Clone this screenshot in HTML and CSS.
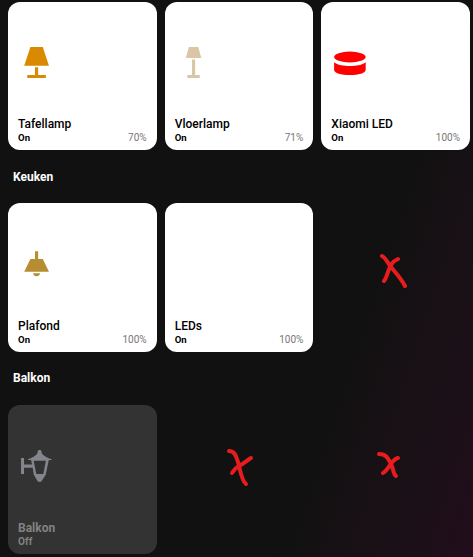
FILE: index.html
```html
<!DOCTYPE html>
<html lang="nl">
<head>
<meta charset="utf-8">
<title>Lampen</title>
<link rel="stylesheet" href="styles.css">
</head>
<body>
<main class="dashboard">
  <section class="grid">
    <article class="card">
      <svg class="icon amber" viewBox="0 0 24 24"><path d="M8,2H16L20,14H4L8,2M11,15H13V20H18V22H6V20H11V15Z"/></svg>
      <div class="info"><div class="name">Tafellamp</div><div class="status"><span class="state">On</span><span class="level">70%</span></div></div>
    </article>
    <article class="card">
      <svg class="icon beige" viewBox="0 0 24 24"><path d="M9,2H15L17,9H7L9,2M11,10H13V20H16V22H8V20H11V10Z"/></svg>
      <div class="info"><div class="name">Vloerlamp</div><div class="status"><span class="state">On</span><span class="level">71%</span></div></div>
    </article>
    <article class="card">
      <svg class="icon red" viewBox="0 0 24 24"><ellipse cx="12.2" cy="8.4" rx="10.2" ry="3.5"/><path d="M2,11.8C4.2,13.7 8.2,14.2 12.2,14.2S20.2,13.7 22.4,11.8V16.6C22.4,18.7 17.8,20.1 12.2,20.1S2,18.7 2,16.6Z"/></svg>
      <div class="info"><div class="name">Xiaomi LED</div><div class="status"><span class="state">On</span><span class="level">100%</span></div></div>
    </article>
  </section>
  <h2 class="room">Keuken</h2>
  <section class="grid">
    <article class="card">
      <svg class="icon brass" viewBox="0 0 24 24"><path d="M8,9H11V4H13V9H16L20,17.2H4L8,9M14.2,18.2C14.2,19.4 13.2,20.2 12,20.2S9.8,19.4 9.8,18.2Z"/></svg>
      <div class="info"><div class="name">Plafond</div><div class="status"><span class="state">On</span><span class="level">100%</span></div></div>
    </article>
    <article class="card">
      <div class="icon"></div>
      <div class="info"><div class="name">LEDs</div><div class="status"><span class="state">On</span><span class="level">100%</span></div></div>
    </article>
  </section>
  <h2 class="room">Balkon</h2>
  <section class="grid">
    <article class="card off">
      <svg class="icon" viewBox="0 0 37 37"><path fill-rule="evenodd" d="M3,11H6V17.5H14L13,13H10V12.3Q17,10 19.5,6V4.5L20.5,3H22.5L23.5,4.5V6Q26,10 33.5,12.3V13H30.7L27.5,28L24,33L23,34.5H20L19,33L15.8,28L14.6,20.7H6V27H3ZM15.6,13.8L18.2,27H25.2L27.8,13.8Z"/></svg>
      <div class="info"><div class="name">Balkon</div><div class="status"><span class="state">Off</span></div></div>
    </article>
  </section>
  <svg class="marks" viewBox="0 0 473 557">
    <path d="M382,256C386,258 387,262 391,267S401,278 405,286M398,259C391,262 390,267 388,272S386,279 384,281"/>
    <path d="M229,451C235,451 236,456 238,462S241,480 246,484M251,458C246,461 243,464 239,466S234,470 232,473"/>
    <path d="M379,454C386,454 388,458 391,464S393,474 396,476M398,458C393,459 391,464 388,468S385,472 383,473"/>
  </svg>
</main>
</body>
</html>
```
FILE: styles.css
```css
* { box-sizing: border-box; }

body {
  margin: 0;
  font-family: Roboto, "Liberation Sans", sans-serif;
  background: #111;
}

.dashboard {
  position: relative;
  width: 473px;
  height: 557px;
  overflow: hidden;
  padding: 1.6px 3px 0 8px;
  background: linear-gradient(108.4deg, #111 70%, #1b1017 88%, #220e1c 100%);
}

.grid {
  display: grid;
  grid-template-columns: repeat(3, 1fr);
  gap: 8px;
}

.card {
  display: flex;
  flex-direction: column;
  justify-content: space-between;
  height: 148.6px;
  padding: 42px 10px 6px;
  border-radius: 12px;
  background: #fff;
  color: #000;
}

.icon {
  display: block;
  width: 37.17px;
  height: 37.17px;
  fill: currentColor;
}

.amber { color: #d98a00; }
.beige { color: #dac6a4; }
.red { color: #f00; }
.brass { color: #b68d30; }

.name {
  font-size: 12px;
  font-weight: 500;
  line-height: 14px;
}

.status {
  display: flex;
  justify-content: space-between;
  font-size: 10px;
  line-height: 13px;
}

.state {
  font-size: 9.6px;
  font-weight: 700;
  letter-spacing: 0.1px;
}

.level { color: #777; }

.off {
  background: #333;
  color: #82858b;
}

.off .info { color: #828282; }
.off .name { font-weight: 700; }
.off .state { font-size: 10px; }

.room {
  height: 53.2px;
  margin: 0;
  padding: 18.4px 5px 0;
  color: #fff;
  font-size: 12px;
  font-weight: 700;
  line-height: 17px;
}

.marks {
  position: absolute;
  inset: 0;
  width: 473px;
  height: 557px;
  fill: none;
  stroke: #e81c1c;
  stroke-width: 4;
  stroke-linecap: round;
  stroke-linejoin: round;
  pointer-events: none;
}
```
